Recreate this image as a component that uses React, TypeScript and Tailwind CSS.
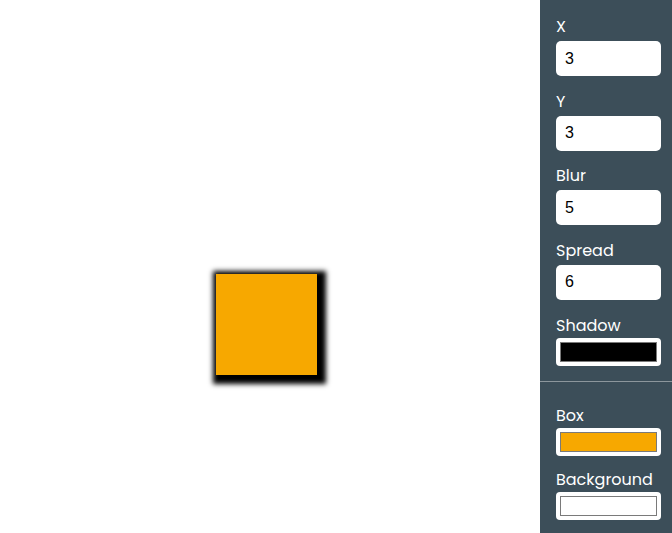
import React, { useState } from 'react';

const labelCls = "block text-[16px] leading-6 text-white font-['Poppins','Noto_Sans',sans-serif]";

const NumberField = ({ label, value, onChange }: { label: string; value: string; onChange: (v: string) => void }) => (
  <div className="mb-[13.67px]">
    <label className={`${labelCls} mb-[2px]`}>{label}</label>
    <input
      type="text"
      value={value}
      onChange={(e) => onChange(e.target.value)}
      className="block w-[105px] h-[35px] rounded-[5px] bg-white px-[9px] text-[16px] text-black outline-none font-['Liberation_Sans',Arial,sans-serif]"
    />
  </div>
);

const ColorField = ({ label, color }: { label: string; color: string }) => (
  <div className="mb-[12px]">
    <label className={labelCls}>{label}</label>
    <div className="w-[105px] h-[28px] rounded-[4px] bg-white p-[4px]">
      <div className="w-full h-full border border-[#7a7a7a]" style={{ backgroundColor: color }} />
    </div>
  </div>
);

const App = () => {
  const [x, setX] = useState('3');
  const [y, setY] = useState('3');
  const [blur, setBlur] = useState('5');
  const [spread, setSpread] = useState('6');

  return (
    <div className="flex w-[672px] h-[533px] overflow-hidden bg-white">
      <div className="flex-1 flex justify-center pt-[274px] pr-[8px]">
        <div className="w-[101px] h-[101px] bg-[#f7a800] shadow-[3px_3px_5px_6px_#000]" />
      </div>
      <aside className="w-[132px] bg-[#3c4e59] pt-[15px]">
        <div className="pl-4">
          <NumberField label="X" value={x} onChange={setX} />
          <NumberField label="Y" value={y} onChange={setY} />
          <NumberField label="Blur" value={blur} onChange={setBlur} />
          <NumberField label="Spread" value={spread} onChange={setSpread} />
          <ColorField label="Shadow" color="#000000" />
        </div>
        <div className="h-px bg-[#8c969c] mt-[15px] mb-[22px]" />
        <div className="pl-4">
          <ColorField label="Box" color="#f7a800" />
          <ColorField label="Background" color="#ffffff" />
        </div>
      </aside>
    </div>
  );
};

export default App;
